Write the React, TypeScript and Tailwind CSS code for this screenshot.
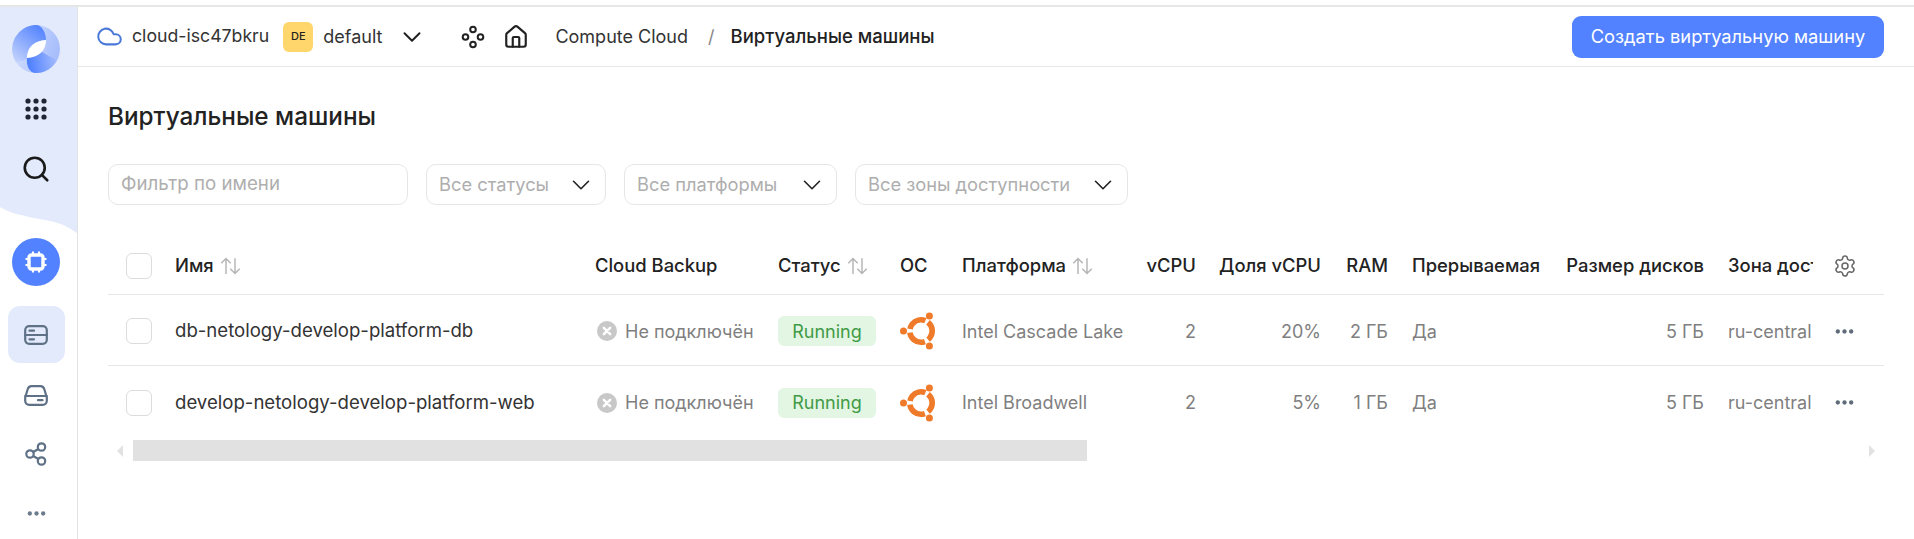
import * as React from 'react';
import { ChevronDown, Cloud, House, Search, Settings } from 'lucide-react';

const rowGrid =
  'grid grid-cols-[67px_420px_183px_122px_62px_178px_56px_125px_67px_172px_144px_109px_71px] items-center';

type Vm = { name: string; platform: string; share: string; ram: string };

const vms: Vm[] = [
  { name: 'db-netology-develop-platform-db', platform: 'Intel Cascade Lake', share: '20%', ram: '2 ГБ' },
  { name: 'develop-netology-develop-platform-web', platform: 'Intel Broadwell', share: '5%', ram: '1 ГБ' },
];

/** Cloud logo: pale disc, two blue petals and a white leaf */
const Logo = () => (
  <svg viewBox="0 0 48 48" width={48} height={48}>
    <defs>
      <linearGradient id="logoBase" x1="0" y1="0" x2="1" y2="0.3">
        <stop offset="0" stopColor="#dbe4fd" />
        <stop offset="1" stopColor="#a8bffc" />
      </linearGradient>
      <linearGradient id="logoTop" x1="0.8" y1="0" x2="0.1" y2="1">
        <stop offset="0" stopColor="#5282ff" />
        <stop offset="1" stopColor="#c4d3fc" />
      </linearGradient>
      <linearGradient id="logoBottom" x1="0.1" y1="0.6" x2="1" y2="0.5">
        <stop offset="0" stopColor="#5282ff" />
        <stop offset="1" stopColor="#a3bbfd" />
      </linearGradient>
    </defs>
    <circle cx="24" cy="24" r="24" fill="url(#logoBase)" />
    <path d="M24 0A24 24 0 0 0 4 37C8 36 13 36 15 33C15 22 23 15.5 34 15C34 8 30 0 24 0Z" fill="url(#logoTop)" />
    <path d="M15 33C14 40 17 48 24 48A24 24 0 0 0 45 35C40 32 36 31 30 27Z" fill="url(#logoBottom)" />
    <path d="M15 33C15 22 23 15.5 34 15C34 26 26 32.5 15 33Z" fill="#fff" />
  </svg>
);

const DotsGrid = () => (
  <svg viewBox="0 0 22 22" width={22} height={22} fill="#1f2533">
    {[3, 11, 19].map((y) =>
      [3, 11, 19].map((x) => <circle key={`${x}-${y}`} cx={x} cy={y} r={2.6} />),
    )}
  </svg>
);

const ChipIcon = () => (
  <svg viewBox="0 0 24 24" width={24} height={24} fill="none">
    <rect x="5" y="5" width="14" height="14" rx="2.5" stroke="#fff" strokeWidth="3.4" />
    <path d="M9 1.5v3M15 1.5v3M9 19.5v3M15 19.5v3M1.5 9h3M1.5 15h3M19.5 9h3M19.5 15h3" stroke="#fff" strokeWidth="2.2" />
  </svg>
);

const ServerIcon = () => (
  <svg viewBox="0 0 24 20" width={24} height={20} fill="none" stroke="#5f7186" strokeWidth="2.2" strokeLinecap="round">
    <rect x="1.2" y="1.2" width="21.6" height="17.6" rx="4" />
    <path d="M1.2 10h21.6M5.5 5.7h4.5M5.5 14.3h4.5" />
  </svg>
);

const DiskIcon = () => (
  <svg viewBox="0 0 24 21" width={24} height={21} fill="none" stroke="#5f7186" strokeWidth="2.2" strokeLinecap="round">
    <path d="M1.2 12.5 3.6 4.5C4.2 2.4 5.6 1.2 7.5 1.2h9c1.9 0 3.3 1.2 3.9 3.3l2.4 8v3.3a4 4 0 0 1-4 4H5.2a4 4 0 0 1-4-4Z" />
    <path d="M1.2 11h21.6M14 15.2h4.5" />
  </svg>
);

const ConnectIcon = () => (
  <svg viewBox="0 0 22 24" width={22} height={24} fill="none" stroke="#5f7186" strokeWidth="2.2">
    <circle cx="5" cy="12" r="3.7" />
    <circle cx="16.5" cy="5" r="3.7" />
    <circle cx="16.5" cy="19" r="3.7" />
    <path d="M8.2 10 13.3 7M8.2 14 13.3 17" />
  </svg>
);

const MoreDots = ({ color }: { color: string }) => (
  <svg viewBox="0 0 22 6" width={19} height={5} fill={color}>
    <circle cx="3" cy="3" r="2.6" />
    <circle cx="11" cy="3" r="2.6" />
    <circle cx="19" cy="3" r="2.6" />
  </svg>
);

const ServicesIcon = () => (
  <svg viewBox="0 0 24 24" width={24} height={24} fill="none" stroke="#222" strokeWidth="2">
    <circle cx="12" cy="4.5" r="2.8" />
    <circle cx="4.5" cy="12" r="2.8" />
    <circle cx="19.5" cy="12" r="2.8" />
    <circle cx="12" cy="19.5" r="2.8" />
  </svg>
);

const SortIcon = () => (
  <svg viewBox="0 0 20 16" width={23} height={18} fill="none" stroke="#b5b5b5" strokeWidth="1.3" className="ml-[5px]">
    <path d="M6 15V1.5M1.8 5.5 6 1.3l4.2 4.2M14 1v13.5M9.8 10.5l4.2 4.2 4.2-4.2" />
  </svg>
);

const UbuntuIcon = () => (
  <svg viewBox="-21 -20 42 40" width={42} height={40} fill="none">
    <circle r="11.2" stroke="#ef7a2a" strokeWidth="5.6" strokeDasharray="19.86 3.6" transform="rotate(-51)" />
    <g fill="#ef7a2a">
      <circle cx="-17.5" cy="0" r="3.5" />
      <circle cx="8.4" cy="15" r="3.5" />
      <circle cx="8.4" cy="-15" r="3.5" />
    </g>
  </svg>
);

const NotConnectedIcon = () => (
  <svg viewBox="0 0 20 20" width={20} height={20} className="ml-[2px] shrink-0">
    <circle cx="10" cy="10" r="10" fill="#c8c8c8" />
    <path d="M6.8 6.8l6.4 6.4M13.2 6.8l-6.4 6.4" stroke="#fff" strokeWidth="2.4" strokeLinecap="round" />
  </svg>
);

const Checkbox = () => <div className="size-[26px] rounded-[6px] border border-[#dcdcdc] bg-white" />;

const SelectFilter: React.FC<{ label: string; width: string }> = ({ label, width }) => (
  <div className={`flex h-[41px] items-center justify-between rounded-[10px] border border-[#e6e6e6] pl-[12px] pr-[9px] ${width}`}>
    <span className="text-[18.3px] text-[#aeaeae]">{label}</span>
    <ChevronDown size={30} strokeWidth={1.3} color="#222" />
  </div>
);

const Sidebar = () => (
  <aside className="relative flex h-full w-[78px] shrink-0 flex-col items-center border-r border-r-[#e3e3e3] pr-[5px]">
    {/* Tinted top part of the rail, ends in a wave */}
    <svg viewBox="0 0 77 226" width={77} height={226} className="absolute left-0 top-0" preserveAspectRatio="none">
      <path d="M0 0H77V226C60 214 50 214 34 211C20 208 10 206 0 200Z" fill="#e3eafc" />
    </svg>
    <div className="relative mt-[18px] flex size-[48px] items-center justify-center">
      <Logo />
    </div>
    <div className="relative mt-[24px] flex h-[24px] items-center">
      <DotsGrid />
    </div>
    <div className="relative mt-[33px]">
      <Search size={30} strokeWidth={2.1} color="#1a1a1a" />
    </div>
    <div className="relative mt-[54px] flex size-[48px] items-center justify-center rounded-full bg-[#5282ff]">
      <ChipIcon />
    </div>
    <div className="mt-[20px] flex size-[57px] items-center justify-center rounded-[12px] bg-[#e3eafc]">
      <ServerIcon />
    </div>
    <div className="mt-[20px] flex h-[24px] items-center">
      <DiskIcon />
    </div>
    <div className="mt-[35px] flex h-[24px] items-center">
      <ConnectIcon />
    </div>
    <div className="mt-[45px] flex items-center">
      <MoreDots color="#6b7a8c" />
    </div>
  </aside>
);

const TopBar = () => (
  <header className="flex h-[60px] items-center border-b border-b-[#e7e7e7] pl-[18px] pr-[30px] text-[#333]">
    <Cloud size={27} strokeWidth={1.8} color="#4a78d8" />
    <span className="ml-[9px] text-[17.7px]">cloud-isc47bkru</span>
    <div className="ml-[14px] flex size-[30px] items-center justify-center rounded-[6px] bg-[#ffd66b] text-[11px] font-medium text-[#222]">
      DE
    </div>
    <span className="ml-[10px]">default</span>
    <ChevronDown size={30} strokeWidth={1.6} color="#222" className="ml-[15px]" />
    <div className="ml-[34px]">
      <ServicesIcon />
    </div>
    <House size={26} strokeWidth={2} color="#222" className="ml-[18px]" />
    <span className="ml-[26px]">Compute Cloud</span>
    <span className="ml-[20px] text-[#888]">/</span>
    <span className="ml-[16px] text-[18.5px] font-medium text-[#222]">Виртуальные машины</span>
    <button className="ml-auto h-[42px] w-[312px] rounded-[9px] bg-[#5282ff] text-[18.3px] text-white">
      Создать виртуальную машину
    </button>
  </header>
);

const TableHeader = () => (
  <div className={`${rowGrid} h-[57px] border-b border-b-[#e6e6e6] text-[18.4px] font-medium text-[#222]`}>
    <div className="pl-[18px]">
      <Checkbox />
    </div>
    <div className="flex items-center">
      Имя
      <SortIcon />
    </div>
    <div>Cloud Backup</div>
    <div className="flex items-center">
      Статус
      <SortIcon />
    </div>
    <div>ОС</div>
    <div className="flex items-center">
      Платформа
      <SortIcon />
    </div>
    <div className="text-right">vCPU</div>
    <div className="text-right">Доля vCPU</div>
    <div className="text-right">RAM</div>
    <div className="pl-[24px]">Прерываемая</div>
    <div className="text-right">Размер дисков</div>
    <div className="overflow-hidden whitespace-nowrap pl-[24px]">Зона доступности</div>
    <div className="pl-[20px]">
      <Settings size={24} strokeWidth={1.5} color="#666" />
    </div>
  </div>
);

const VmRow: React.FC<{ vm: Vm; last: boolean }> = ({ vm, last }) => (
  <div className={`${rowGrid} h-[71px] pt-[2px] text-[#7f7f7f] ${last ? '' : 'border-b border-b-[#e6e6e6]'}`}>
    <div className="pl-[18px]">
      <Checkbox />
    </div>
    <div className="text-[18.6px] text-[#333]">{vm.name}</div>
    <div className="flex items-center gap-[8px]">
      <NotConnectedIcon />
      Не подключён
    </div>
    <div>
      <span className="inline-flex h-[30px] w-[98px] items-center justify-center rounded-[6px] bg-[#e3f5e3] text-[#3f9b45]">
        Running
      </span>
    </div>
    <div>
      <UbuntuIcon />
    </div>
    <div>{vm.platform}</div>
    <div className="text-right">2</div>
    <div className="text-right">{vm.share}</div>
    <div className="text-right">{vm.ram}</div>
    <div className="pl-[24px]">Да</div>
    <div className="text-right">5 ГБ</div>
    <div className="whitespace-nowrap pl-[24px]">ru-central</div>
    <div className="flex pl-[22px]">
      <MoreDots color="#5f6b78" />
    </div>
  </div>
);

const ScrollBar = () => (
  <div className="mt-[3px] flex h-[21px] items-center pl-[9px] pr-[9px]">
    <div className="h-0 w-0 border-y-[6px] border-r-[6px] border-y-transparent border-r-[#e2e2e2]" />
    <div className="ml-[10px] h-full w-[954px] bg-[#e1e1e1]" />
    <div className="ml-auto h-0 w-0 border-y-[6px] border-l-[6px] border-y-transparent border-l-[#e2e2e2]" />
  </div>
);

export default function App() {
  return (
    <div className="h-[539px] w-[1914px] overflow-hidden bg-white font-['Inter','Liberation_Sans',sans-serif] text-[18px]">
      <div className="h-[5px]" />
      <div className="flex h-[534px] flex-col border-t-2 border-t-[#e6e6e6]">
        <div className="flex min-h-0 flex-1">
          <Sidebar />
          <main className="min-w-0 flex-1">
            <TopBar />
            <div className="pl-[30px] pr-[30px] pt-[34px]">
              <h1 className="text-[24.3px] font-medium leading-[30px] text-[#222]">Виртуальные машины</h1>
              <div className="mt-[33px] flex gap-[18px]">
                <div className="flex h-[41px] w-[300px] items-center rounded-[10px] border border-[#e6e6e6] pl-[12px] text-[18.7px] text-[#aeaeae]">
                  Фильтр по имени
                </div>
                <SelectFilter label="Все статусы" width="w-[180px]" />
                <SelectFilter label="Все платформы" width="w-[213px]" />
                <SelectFilter label="Все зоны доступности" width="w-[273px]" />
              </div>
              <div className="mt-[33px]">
                <TableHeader />
                {vms.map((vm, i) => (
                  <VmRow key={vm.name} vm={vm} last={i === vms.length - 1} />
                ))}
                <ScrollBar />
              </div>
            </div>
          </main>
        </div>
      </div>
    </div>
  );
}
